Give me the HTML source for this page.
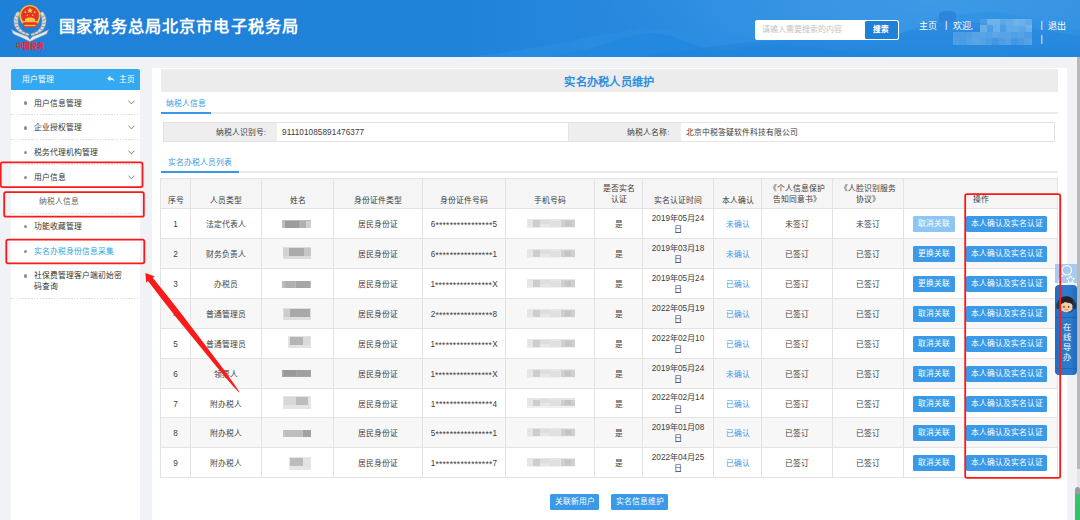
<!DOCTYPE html>
<html lang="zh-CN">
<head>
<meta charset="utf-8">
<title>国家税务总局北京市电子税务局</title>
<style>
html,body{margin:0;padding:0}
body{width:1080px;height:520px;overflow:hidden;background:#f0f2f5;font-family:"Liberation Sans",sans-serif;font-size:7.8px;color:#3a3a3a;position:relative;line-height:1.2}
div,span,a{box-sizing:border-box}
.abs{position:absolute}
#hd{position:absolute;left:0;top:0;width:1080px;height:57px;background:linear-gradient(90deg,#1f80d8 0%,#2083da 42%,#2788dd 58%,#3090e2 76%,#3292e3 90%,#2f8fe1 100%);overflow:hidden}
#hd svg.bg{position:absolute;left:0;top:0}
#title{position:absolute;left:58.5px;top:15.8px;font-size:16.2px;font-weight:bold;color:#fff;white-space:nowrap;line-height:20px}
#title span{display:inline-block;width:17.17px;text-align:center}
#logo{position:absolute;left:9.5px;top:2px}
#search{position:absolute;left:755px;top:19.5px;width:143.5px;height:20px;border-radius:2px;background:#fff;overflow:hidden;border:1px solid #fff}
#search .ph{position:absolute;left:6px;top:0;line-height:18px;font-size:8px;color:#c2c2c2;white-space:nowrap}
#search .btn{position:absolute;right:0;top:0;width:32.8px;height:18px;background:#1f80d8;color:#fff;font-weight:bold;font-size:7.6px;text-align:center;line-height:18px}
.nav{position:absolute;color:#fff;font-size:9px;white-space:nowrap;line-height:11px}
#side{position:absolute;left:11px;top:68.6px;width:129px;height:452px;background:#fff}
#side .sh{position:absolute;left:0;top:0;width:129px;height:21.2px;background:#34a9f1;border-radius:2px 2px 0 0;color:#fff}
#side .it{position:absolute;left:0;width:129px;color:#333;background:repeating-linear-gradient(90deg,#dcdee2 0,#dcdee2 1.5px,transparent 1.5px,transparent 2.86px) left bottom/100% 1px no-repeat}
#side .it .bl{position:absolute;left:13.3px;top:50%;width:3.2px;height:3.2px;margin-top:-1.3px;border-radius:50%;background:#8f8f8f}
#side .it .tx{position:absolute;left:23.3px;white-space:nowrap}
#side .it svg{position:absolute;left:116.5px;top:50%;margin-top:-2.4px}
.rb{position:absolute;border:1.9px solid #fb1b1b;border-radius:3px}
#panel{position:absolute;left:152px;top:68.4px;width:914.5px;height:452px;background:#fff}
#ptitle{position:absolute;left:160.5px;top:69px;width:897.5px;height:22.6px;background:#ececec;color:#2e8fe0;font-weight:bold;font-size:11.2px;text-align:center;line-height:26px;white-space:nowrap}
#ptitle span{display:inline-block;width:11.3px;text-align:center}
.tabline{position:absolute;left:160.5px;width:897.5px;height:1.5px;background:#eaeaea}
.tabact{position:absolute;height:2px;background:#3a97e6}
.tabtx{position:absolute;color:#3a97e6;white-space:nowrap}
.c{position:absolute;display:flex;align-items:center;justify-content:center;text-align:center;border-right:1px solid #e3e3e3;border-bottom:1px solid #e3e3e3;line-height:11.4px;color:#404040}
.c.h{background:#f5f5f5;color:#3a3a3a}
.c.e{background:#f7f7f7}
.c a{color:#3a97e6}
.c .v{position:relative;top:1.3px}
.d{font-size:8.2px}
.as{font-size:8.6px;letter-spacing:.23px;position:relative;top:.8px}
.btn{position:absolute;background:#3a9ae8;color:#fff;border-radius:1.5px;text-align:center;white-space:nowrap}
.btn.dis{background:#8fc5f2}
.mz{position:absolute;filter:blur(.7px)}
</style>
</head>
<body>
<div id="hd">
<svg class="bg" width="1080" height="57" viewBox="0 0 1080 57">
 <defs>
  <linearGradient id="m2" x1="0" y1="0" x2="0" y2="1"><stop offset="0" stop-color="#2a8be0"/><stop offset="1" stop-color="#2083dc"/></linearGradient>
  <radialGradient id="sky" cx="930" cy="0" r="330" gradientUnits="userSpaceOnUse" gradientTransform="translate(0 0) scale(1 .22)"><stop offset="0" stop-color="#4aa3ea" stop-opacity=".45"/><stop offset="1" stop-color="#4aa3ea" stop-opacity="0"/></radialGradient>
 </defs>
 <rect x="0" y="0" width="1080" height="57" fill="url(#sky)"/>
 <path d="M470 57 L520 50 L570 41 L610 33 L640 28 L680 31 L730 36 L790 40 L850 38 L900 33 L925 24 L938 17 L943 11 L952 11 L955 15 L975 13 L1000 12 L1030 18 L1060 26 L1080 31 L1080 57 Z" fill="#2e8fe2" opacity=".55"/>
 <path d="M939 23 L939 12.5 L942 12.5 L942 11 L953 11 L953 12.5 L956 12.5 L956 23 Z" fill="#2a82d8" opacity=".8"/>
 <path d="M956 21 L975 28 L1000 38 L1033 53 L1040 57 L1015 57 L990 44 L965 32 L950 27 Z" fill="#2584dc" opacity=".55"/>
 <path d="M548 57 L580 51 L610 42.5 L633 35.5 L653 33 L672 36 L692 44 L717 52 L742 48 L773 43.5 L805 46 L845 51 L885 57 Z" fill="#2389e0"/>
 <path d="M640 57 L690 49 L745 42.5 L800 39 L850 37.5 L900 33.5 L925 27 L945 22 L990 23 L1030 28 L1080 36 L1080 57 Z" fill="url(#m2)" opacity=".8"/>
</svg>
<svg id="logo" width="40" height="52" viewBox="0 0 40 52">
 <g>
  <path d="M7.4 9.6 C2.6 14.6 2.4 23.4 7.6 28.6 C10.8 31.6 15 33 19 34 L19 31.6 C13.2 30.2 9.6 27.2 8.4 22.2 C7.6 18 8.2 14 10.4 10.8 Z" fill="#d4d8dd" stroke="#7d868f" stroke-width=".55"/>
  <path d="M32.6 9.6 C37.4 14.6 37.6 23.4 32.4 28.6 C29.2 31.6 25 33 21 34 L21 31.6 C26.8 30.2 30.4 27.2 31.6 22.2 C32.4 18 31.8 14 29.6 10.8 Z" fill="#d4d8dd" stroke="#7d868f" stroke-width=".55"/>
  <path d="M5.4 13.6 l2.6 1.6 M4.4 17.4 l3 1 M4.4 21.2 l3.2 .2 M5.4 25 l3.2-.8 M7.6 28.2 l2.8-1.8 M11 30.8 l2-2.4 M14.8 32.6 l1.2-2.6" stroke="#6f7882" stroke-width=".7" fill="none"/>
  <path d="M34.6 13.6 l-2.6 1.6 M35.6 17.4 l-3 1 M35.6 21.2 l-3.2 .2 M34.6 25 l-3.2-.8 M32.4 28.2 l-2.8-1.8 M29 30.8 l-2-2.4 M25.2 32.6 l-1.2-2.6" stroke="#6f7882" stroke-width=".7" fill="none"/>
  <path d="M1.4 27.6 C6 30.6 12 32.6 17.6 34.4 L20 37.4 L22.4 34.4 C28 32.6 34 30.6 38.6 27.6 L36.6 32 C31 34.6 26 36.4 20 39.6 C14 36.4 9 34.6 3.4 32 Z" fill="#e6e9ec" stroke="#8d96a0" stroke-width=".55"/>
  <ellipse cx="20" cy="13.9" rx="10.5" ry="11" fill="#efbf35"/>
  <ellipse cx="20" cy="13.6" rx="9" ry="9.3" fill="#e6322b"/>
  <path d="M11.2 19 H28.8 V20.5 H11.2 Z" fill="#efbf35"/>
  <path d="M15 17 Q20 14.2 25 17 V19 H15 Z" fill="#f2c63e"/>
  <path d="M12.8 20.4 H27.2 L26.2 25.6 H13.8 Z" fill="#e5322b"/>
  <path d="M14.4 22.8 H25.6 V24.2 H14.4 Z" fill="#efbf35"/>
  <path d="M20 5.6 l.9 1.8 2 .25 -1.45 1.4 .35 2 -1.8-.95 -1.8.95 .35-2 -1.45-1.4 2-.25z" fill="#f7d54a"/>
  <circle cx="15.4" cy="10.2" r=".85" fill="#f7d54a"/><circle cx="24.6" cy="10.2" r=".85" fill="#f7d54a"/>
  <circle cx="17.4" cy="13.2" r=".75" fill="#f7d54a"/><circle cx="22.6" cy="13.2" r=".75" fill="#f7d54a"/>
 </g>
 <text x="20" y="46.9" text-anchor="middle" font-family="Liberation Sans, sans-serif" font-size="7.7" font-weight="bold" fill="#f0262a" textLength="28.5" lengthAdjust="spacingAndGlyphs">中国税务</text>
</svg>
<div id="title"><span>国</span><span>家</span><span>税</span><span>务</span><span>总</span><span>局</span><span>北</span><span>京</span><span>市</span><span>电</span><span>子</span><span>税</span><span>务</span><span>局</span></div>
<div id="search"><span class="ph">请输入需要搜索的内容</span><span class="btn">搜索</span></div>
<div class="nav" style="left:918.6px;top:20.6px">主页</div>
<div class="nav" style="left:945px;top:20.4px">|</div>
<div class="nav" style="left:952.6px;top:20.6px">欢迎,</div>
<div class="abs" style="left:0;top:0;filter:blur(.35px)"><i class="abs" style="left:980.0px;top:19.0px;width:6.5px;height:6.4px;background:rgba(255,255,255,0.10)"></i><i class="abs" style="left:986.5px;top:19.0px;width:6.5px;height:6.4px;background:rgba(255,255,255,0.30)"></i><i class="abs" style="left:993.0px;top:19.0px;width:6.5px;height:6.4px;background:rgba(255,255,255,0.30)"></i><i class="abs" style="left:999.5px;top:19.0px;width:6.5px;height:6.4px;background:rgba(255,255,255,0.20)"></i><i class="abs" style="left:1006.0px;top:19.0px;width:6.5px;height:6.4px;background:rgba(255,255,255,0.24)"></i><i class="abs" style="left:1012.5px;top:19.0px;width:6.5px;height:6.4px;background:rgba(255,255,255,0.30)"></i><i class="abs" style="left:1019.0px;top:19.0px;width:6.5px;height:6.4px;background:rgba(255,255,255,0.28)"></i><i class="abs" style="left:1025.5px;top:19.0px;width:6.5px;height:6.4px;background:rgba(255,255,255,0.22)"></i><i class="abs" style="left:980.0px;top:25.4px;width:6.5px;height:6.4px;background:rgba(255,255,255,0.30)"></i><i class="abs" style="left:986.5px;top:25.4px;width:6.5px;height:6.4px;background:rgba(255,255,255,0.16)"></i><i class="abs" style="left:993.0px;top:25.4px;width:6.5px;height:6.4px;background:rgba(255,255,255,0.30)"></i><i class="abs" style="left:999.5px;top:25.4px;width:6.5px;height:6.4px;background:rgba(255,255,255,0.16)"></i><i class="abs" style="left:1006.0px;top:25.4px;width:6.5px;height:6.4px;background:rgba(255,255,255,0.26)"></i><i class="abs" style="left:1012.5px;top:25.4px;width:6.5px;height:6.4px;background:rgba(255,255,255,0.28)"></i><i class="abs" style="left:1019.0px;top:25.4px;width:6.5px;height:6.4px;background:rgba(255,255,255,0.24)"></i><i class="abs" style="left:1025.5px;top:25.4px;width:6.5px;height:6.4px;background:rgba(255,255,255,0.30)"></i><i class="abs" style="left:952.6px;top:31.8px;width:6.5px;height:6.6px;background:rgba(255,255,255,0.16)"></i><i class="abs" style="left:959.1px;top:31.8px;width:6.5px;height:6.6px;background:rgba(255,255,255,0.16)"></i><i class="abs" style="left:965.6px;top:31.8px;width:6.5px;height:6.6px;background:rgba(255,255,255,0.18)"></i><i class="abs" style="left:972.1px;top:31.8px;width:6.5px;height:6.6px;background:rgba(255,255,255,0.22)"></i><i class="abs" style="left:978.6px;top:31.8px;width:6.5px;height:6.6px;background:rgba(255,255,255,0.24)"></i><i class="abs" style="left:985.1px;top:31.8px;width:6.5px;height:6.6px;background:rgba(255,255,255,0.21)"></i><i class="abs" style="left:991.6px;top:31.8px;width:6.5px;height:6.6px;background:rgba(255,255,255,0.24)"></i><i class="abs" style="left:998.1px;top:31.8px;width:6.5px;height:6.6px;background:rgba(255,255,255,0.22)"></i><i class="abs" style="left:1004.6px;top:31.8px;width:6.5px;height:6.6px;background:rgba(255,255,255,0.22)"></i><i class="abs" style="left:1011.1px;top:31.8px;width:6.5px;height:6.6px;background:rgba(255,255,255,0.18)"></i><i class="abs" style="left:1017.6px;top:31.8px;width:6.5px;height:6.6px;background:rgba(255,255,255,0.21)"></i><i class="abs" style="left:1024.1px;top:31.8px;width:6.5px;height:6.6px;background:rgba(255,255,255,0.16)"></i><i class="abs" style="left:1030.6px;top:31.8px;width:1.4px;height:6.6px;background:rgba(255,255,255,0.16)"></i><i class="abs" style="left:952.6px;top:38.4px;width:6.5px;height:6.6px;background:rgba(255,255,255,0.18)"></i><i class="abs" style="left:959.1px;top:38.4px;width:6.5px;height:6.6px;background:rgba(255,255,255,0.16)"></i><i class="abs" style="left:965.6px;top:38.4px;width:6.5px;height:6.6px;background:rgba(255,255,255,0.21)"></i><i class="abs" style="left:972.1px;top:38.4px;width:6.5px;height:6.6px;background:rgba(255,255,255,0.24)"></i><i class="abs" style="left:978.6px;top:38.4px;width:6.5px;height:6.6px;background:rgba(255,255,255,0.22)"></i><i class="abs" style="left:985.1px;top:38.4px;width:6.5px;height:6.6px;background:rgba(255,255,255,0.18)"></i><i class="abs" style="left:991.6px;top:38.4px;width:6.5px;height:6.6px;background:rgba(255,255,255,0.13)"></i><i class="abs" style="left:998.1px;top:38.4px;width:6.5px;height:6.6px;background:rgba(255,255,255,0.18)"></i><i class="abs" style="left:1004.6px;top:38.4px;width:6.5px;height:6.6px;background:rgba(255,255,255,0.21)"></i><i class="abs" style="left:1011.1px;top:38.4px;width:6.5px;height:6.6px;background:rgba(255,255,255,0.13)"></i><i class="abs" style="left:1017.6px;top:38.4px;width:6.5px;height:6.6px;background:rgba(255,255,255,0.16)"></i><i class="abs" style="left:1024.1px;top:38.4px;width:6.5px;height:6.6px;background:rgba(255,255,255,0.21)"></i><i class="abs" style="left:1030.6px;top:38.4px;width:1.4px;height:6.6px;background:rgba(255,255,255,0.24)"></i></div>
<div class="nav" style="left:1040.5px;top:20px">|</div>
<div class="nav" style="left:1040.5px;top:33.5px">|</div>
<div class="nav" style="left:1047.6px;top:20.6px">退出</div>
</div>
<div id="side">
<div class="sh"><span class="abs" style="left:11.4px;top:0;line-height:21.4px;font-size:7.9px">用户管理</span><svg class="abs" style="left:96px;top:6.6px" width="8" height="8" viewBox="0 0 16 16"><path d="M6.5 1.5 L0.5 7 L6.5 12.5 V9.2 C10.5 9.2 13.2 10.6 15.2 14.2 C14.6 8.8 11.6 5.4 6.5 4.9 Z" fill="#fff"/></svg><span class="abs" style="left:108.2px;top:0;line-height:21.4px;font-size:7.7px">主页</span></div>
<div class="it" style="top:21.2px;height:25.7px"><span class="bl"></span><span class="tx" style="left:23.3px;line-height:27.3px;color:#333">用户信息管理</span><svg width="7" height="5" viewBox="0 0 7 5"><path d="M.4 .6 L3.5 3.9 L6.6 .6" fill="none" stroke="#7a7a7a" stroke-width=".95"/></svg></div>
<div class="it" style="top:46.9px;height:24.5px"><span class="bl"></span><span class="tx" style="left:23.3px;line-height:26.1px;color:#333">企业授权管理</span><svg width="7" height="5" viewBox="0 0 7 5"><path d="M.4 .6 L3.5 3.9 L6.6 .6" fill="none" stroke="#7a7a7a" stroke-width=".95"/></svg></div>
<div class="it" style="top:71.4px;height:24.7px"><span class="bl"></span><span class="tx" style="left:23.3px;line-height:26.3px;color:#333">税务代理机构管理</span><svg width="7" height="5" viewBox="0 0 7 5"><path d="M.4 .6 L3.5 3.9 L6.6 .6" fill="none" stroke="#7a7a7a" stroke-width=".95"/></svg></div>
<div class="it" style="top:96.1px;height:24.8px;background:none"><span class="bl"></span><span class="tx" style="left:23.3px;line-height:26.4px;color:#333">用户信息</span><svg width="7" height="5" viewBox="0 0 7 5"><path d="M.4 .6 L3.5 3.9 L6.6 .6" fill="none" stroke="#7a7a7a" stroke-width=".95"/></svg></div>
<div class="it" style="top:120.9px;height:24.5px"><span class="tx" style="left:28.0px;line-height:26.1px;color:#666">纳税人信息</span></div>
<div class="it" style="top:145.4px;height:24.5px;background:none"><span class="bl"></span><span class="tx" style="left:23.3px;line-height:26.1px;color:#333">功能收藏管理</span></div>
<div class="it" style="top:170.4px;height:25.0px;background:none"><span class="bl"></span><span class="tx" style="left:23.3px;line-height:26.6px;color:#35a3dc">实名办税身份信息采集</span></div>
<div class="it" style="top:194.4px;height:36px"><span class="bl" style="top:11.4px;margin-top:0"></span><span class="tx" style="left:23.3px;top:8px;line-height:10.7px;white-space:normal;width:92px">社保费管理客户端初始密码查询</span></div>
</div>
<div id="panel"></div>
<div id="ptitle"><span>实</span><span>名</span><span>办</span><span>税</span><span>人</span><span>员</span><span>维</span><span>护</span></div>
<div class="tabtx" style="left:166.2px;top:98.7px">纳税人信息</div>
<div class="tabline" style="top:112.2px"></div><div class="tabact" style="left:160.5px;top:112px;width:50.5px"></div>
<div class="abs" style="left:163px;top:122px;width:892px;height:20px;border:1px solid #e3e3e3;background:#fff"></div>
<div class="abs" style="left:164px;top:123px;width:112.6px;height:18px;background:#eeeeee;text-align:right;line-height:19.8px;padding-right:10.8px;white-space:nowrap">纳税人识别号:</div>
<div class="abs" style="left:282px;top:123px;line-height:19.4px;font-size:8.2px;letter-spacing:.08px;white-space:nowrap">911101085891476377</div>
<div class="abs" style="left:567.5px;top:123px;width:113.3px;height:18px;background:#eeeeee;text-align:right;line-height:19.8px;padding-right:11.4px;white-space:nowrap;border-left:1px solid #e3e3e3">纳税人名称:</div>
<div class="abs" style="left:685.8px;top:123px;line-height:19.8px;white-space:nowrap">北京中税答疑软件科技有限公司</div>
<div class="tabtx" style="left:168px;top:157.8px">实名办税人员列表</div>
<div class="tabline" style="top:171px"></div><div class="tabact" style="left:160.5px;top:170.6px;width:78.3px"></div>
<div class="abs" style="left:160.0px;top:178.0px;width:898.0px;height:300.0px;border-left:1px solid #e3e3e3;border-top:1px solid #e3e3e3"></div>
<div class="c h" style="left:161.0px;top:179.0px;width:30.0px;height:30.0px"><span style="position:relative;top:7.1px">序号</span></div>
<div class="c h" style="left:191.0px;top:179.0px;width:71.0px;height:30.0px"><span style="position:relative;top:7.1px">人员类型</span></div>
<div class="c h" style="left:262.0px;top:179.0px;width:72.0px;height:30.0px"><span style="position:relative;top:7.1px">姓名</span></div>
<div class="c h" style="left:334.0px;top:179.0px;width:89.0px;height:30.0px"><span style="position:relative;top:7.1px">身份证件类型</span></div>
<div class="c h" style="left:423.0px;top:179.0px;width:83.0px;height:30.0px"><span style="position:relative;top:7.1px">身份证件号码</span></div>
<div class="c h" style="left:506.0px;top:179.0px;width:89.0px;height:30.0px"><span style="position:relative;top:7.1px">手机号码</span></div>
<div class="c h" style="left:595.0px;top:179.0px;width:48.0px;height:30.0px"><span style="position:relative;top:.9px">是否实名<br>认证</span></div>
<div class="c h" style="left:643.0px;top:179.0px;width:71.0px;height:30.0px"><span style="position:relative;top:7.1px">实名认证时间</span></div>
<div class="c h" style="left:714.0px;top:179.0px;width:48.0px;height:30.0px"><span style="position:relative;top:7.1px">本人确认</span></div>
<div class="c h" style="left:762.0px;top:179.0px;width:71.0px;height:30.0px"><span style="position:relative;top:.9px">《个人信息保护<br>告知同意书》</span></div>
<div class="c h" style="left:833.0px;top:179.0px;width:71.0px;height:30.0px"><span style="position:relative;top:.9px">《人脸识别服务<br>协议》</span></div>
<div class="c h" style="left:904.0px;top:179.0px;width:154.0px;height:30.0px"><span style="position:relative;top:7.1px"></span></div>
<div class="abs" style="left:972.6px;top:195px;white-space:nowrap">操作</div>
<div class="c " style="left:161.0px;top:209.0px;width:30.0px;height:30.0px"><span class="v"><span class="d">1</span></span></div><div class="c " style="left:191.0px;top:209.0px;width:71.0px;height:30.0px"><span class="v">法定代表人</span></div><div class="c " style="left:262.0px;top:209.0px;width:72.0px;height:30.0px"></div><div class="c " style="left:334.0px;top:209.0px;width:89.0px;height:30.0px"><span class="v">居民身份证</span></div><div class="c " style="left:423.0px;top:209.0px;width:83.0px;height:30.0px"><span class="v"><span class="d">6<span class="as">****************</span>5</span></span></div><div class="c " style="left:506.0px;top:209.0px;width:89.0px;height:30.0px"></div><div class="c " style="left:595.0px;top:209.0px;width:48.0px;height:30.0px"><span class="v">是</span></div><div class="c " style="left:643.0px;top:209.0px;width:71.0px;height:30.0px"><span class="v"><span class="d" style="position:relative;top:-.6px">2019年05月24<br>日</span></span></div><div class="c " style="left:714.0px;top:209.0px;width:48.0px;height:30.0px"><span class="v"><a>未确认</a></span></div><div class="c " style="left:762.0px;top:209.0px;width:71.0px;height:30.0px"><span class="v">未签订</span></div><div class="c " style="left:833.0px;top:209.0px;width:71.0px;height:30.0px"><span class="v">未签订</span></div><div class="c " style="left:904.0px;top:209.0px;width:154.0px;height:30.0px"></div>
<div class="mz" style="left:282.0px;top:220.0px;width:28.5px;height:8.4px;background:#bdbdbd"><i class="abs" style="left:3.0px;top:0.5px;width:14.0px;height:7.5px;background:#9c9c9c"></i><i class="abs" style="left:17.0px;top:1.0px;width:7.0px;height:7.0px;background:#b0b0b0"></i><i class="abs" style="left:24.0px;top:1.0px;width:4.5px;height:7.0px;background:#cfcfcf"></i></div><div class="mz" style="left:526.5px;top:218.5px;width:48.0px;height:9.6px;background:#e6e6e6"><i class="abs" style="left:6.0px;top:1.5px;width:7.0px;height:6.5px;background:#cdcdcd"></i><i class="abs" style="left:13.0px;top:1.0px;width:10.0px;height:4.0px;background:#dedede"></i><i class="abs" style="left:23.0px;top:2.0px;width:10.0px;height:6.0px;background:#e0e0e0"></i><i class="abs" style="left:34.0px;top:1.5px;width:14.0px;height:7.0px;background:#cfcfcf"></i><i class="abs" style="left:38.0px;top:2.0px;width:6.0px;height:5.0px;background:#c4c4c4"></i><i class="abs" style="left:0.0px;top:8.0px;width:48.0px;height:1.6px;background:#f0f0f0"></i></div><div class="btn dis" style="left:913px;top:216.0px;width:42px;height:16px;line-height:16.6px">取消关联</div><div class="btn" style="left:966px;top:216.0px;width:81.4px;height:16px;line-height:16.6px">本人确认及实名认证</div>
<div class="c e" style="left:161.0px;top:239.0px;width:30.0px;height:30.0px"><span class="v"><span class="d">2</span></span></div><div class="c e" style="left:191.0px;top:239.0px;width:71.0px;height:30.0px"><span class="v">财务负责人</span></div><div class="c e" style="left:262.0px;top:239.0px;width:72.0px;height:30.0px"></div><div class="c e" style="left:334.0px;top:239.0px;width:89.0px;height:30.0px"><span class="v">居民身份证</span></div><div class="c e" style="left:423.0px;top:239.0px;width:83.0px;height:30.0px"><span class="v"><span class="d">6<span class="as">****************</span>1</span></span></div><div class="c e" style="left:506.0px;top:239.0px;width:89.0px;height:30.0px"></div><div class="c e" style="left:595.0px;top:239.0px;width:48.0px;height:30.0px"><span class="v">是</span></div><div class="c e" style="left:643.0px;top:239.0px;width:71.0px;height:30.0px"><span class="v"><span class="d" style="position:relative;top:-.6px">2019年03月18<br>日</span></span></div><div class="c e" style="left:714.0px;top:239.0px;width:48.0px;height:30.0px"><span class="v"><a>未确认</a></span></div><div class="c e" style="left:762.0px;top:239.0px;width:71.0px;height:30.0px"><span class="v">已签订</span></div><div class="c e" style="left:833.0px;top:239.0px;width:71.0px;height:30.0px"><span class="v">已签订</span></div><div class="c e" style="left:904.0px;top:239.0px;width:154.0px;height:30.0px"></div>
<div class="mz" style="left:283.0px;top:247.0px;width:27.5px;height:12.0px;background:#dcdcdc"><i class="abs" style="left:6.0px;top:1.0px;width:15.0px;height:7.5px;background:#aaaaaa"></i><i class="abs" style="left:21.0px;top:1.0px;width:6.5px;height:8.0px;background:#c6c6c6"></i><i class="abs" style="left:0.0px;top:1.0px;width:6.0px;height:8.0px;background:#d2d2d2"></i></div><div class="mz" style="left:526.5px;top:248.5px;width:48.0px;height:9.6px;background:#e6e6e6"><i class="abs" style="left:6.0px;top:1.5px;width:7.0px;height:6.5px;background:#cdcdcd"></i><i class="abs" style="left:13.0px;top:1.0px;width:10.0px;height:4.0px;background:#dedede"></i><i class="abs" style="left:23.0px;top:2.0px;width:10.0px;height:6.0px;background:#e0e0e0"></i><i class="abs" style="left:34.0px;top:1.5px;width:14.0px;height:7.0px;background:#cfcfcf"></i><i class="abs" style="left:38.0px;top:2.0px;width:6.0px;height:5.0px;background:#c4c4c4"></i><i class="abs" style="left:0.0px;top:8.0px;width:48.0px;height:1.6px;background:#f0f0f0"></i></div><div class="btn " style="left:913px;top:246.0px;width:42px;height:16px;line-height:16.6px">更换关联</div><div class="btn" style="left:966px;top:246.0px;width:81.4px;height:16px;line-height:16.6px">本人确认及实名认证</div>
<div class="c " style="left:161.0px;top:269.0px;width:30.0px;height:30.0px"><span class="v"><span class="d">3</span></span></div><div class="c " style="left:191.0px;top:269.0px;width:71.0px;height:30.0px"><span class="v">办税员</span></div><div class="c " style="left:262.0px;top:269.0px;width:72.0px;height:30.0px"></div><div class="c " style="left:334.0px;top:269.0px;width:89.0px;height:30.0px"><span class="v">居民身份证</span></div><div class="c " style="left:423.0px;top:269.0px;width:83.0px;height:30.0px"><span class="v"><span class="d">1<span class="as">****************</span>X</span></span></div><div class="c " style="left:506.0px;top:269.0px;width:89.0px;height:30.0px"></div><div class="c " style="left:595.0px;top:269.0px;width:48.0px;height:30.0px"><span class="v">是</span></div><div class="c " style="left:643.0px;top:269.0px;width:71.0px;height:30.0px"><span class="v"><span class="d" style="position:relative;top:-.6px">2019年05月24<br>日</span></span></div><div class="c " style="left:714.0px;top:269.0px;width:48.0px;height:30.0px"><span class="v"><a>已确认</a></span></div><div class="c " style="left:762.0px;top:269.0px;width:71.0px;height:30.0px"><span class="v">已签订</span></div><div class="c " style="left:833.0px;top:269.0px;width:71.0px;height:30.0px"><span class="v">已签订</span></div><div class="c " style="left:904.0px;top:269.0px;width:154.0px;height:30.0px"></div>
<div class="mz" style="left:282.0px;top:280.6px;width:28.5px;height:7.8px;background:#bcbcbc"><i class="abs" style="left:3.0px;top:0.4px;width:10.0px;height:7.0px;background:#b0b0b0"></i><i class="abs" style="left:14.0px;top:0.4px;width:14.0px;height:7.0px;background:#a6a6a6"></i></div><div class="mz" style="left:526.5px;top:278.5px;width:48.0px;height:9.6px;background:#e6e6e6"><i class="abs" style="left:6.0px;top:1.5px;width:7.0px;height:6.5px;background:#cdcdcd"></i><i class="abs" style="left:13.0px;top:1.0px;width:10.0px;height:4.0px;background:#dedede"></i><i class="abs" style="left:23.0px;top:2.0px;width:10.0px;height:6.0px;background:#e0e0e0"></i><i class="abs" style="left:34.0px;top:1.5px;width:14.0px;height:7.0px;background:#cfcfcf"></i><i class="abs" style="left:38.0px;top:2.0px;width:6.0px;height:5.0px;background:#c4c4c4"></i><i class="abs" style="left:0.0px;top:8.0px;width:48.0px;height:1.6px;background:#f0f0f0"></i></div><div class="btn " style="left:913px;top:276.0px;width:42px;height:16px;line-height:16.6px">更换关联</div><div class="btn" style="left:966px;top:276.0px;width:81.4px;height:16px;line-height:16.6px">本人确认及实名认证</div>
<div class="c e" style="left:161.0px;top:299.0px;width:30.0px;height:30.0px"><span class="v"><span class="d">4</span></span></div><div class="c e" style="left:191.0px;top:299.0px;width:71.0px;height:30.0px"><span class="v">普通管理员</span></div><div class="c e" style="left:262.0px;top:299.0px;width:72.0px;height:30.0px"></div><div class="c e" style="left:334.0px;top:299.0px;width:89.0px;height:30.0px"><span class="v">居民身份证</span></div><div class="c e" style="left:423.0px;top:299.0px;width:83.0px;height:30.0px"><span class="v"><span class="d">2<span class="as">****************</span>8</span></span></div><div class="c e" style="left:506.0px;top:299.0px;width:89.0px;height:30.0px"></div><div class="c e" style="left:595.0px;top:299.0px;width:48.0px;height:30.0px"><span class="v">是</span></div><div class="c e" style="left:643.0px;top:299.0px;width:71.0px;height:30.0px"><span class="v"><span class="d" style="position:relative;top:-.6px">2022年05月19<br>日</span></span></div><div class="c e" style="left:714.0px;top:299.0px;width:48.0px;height:30.0px"><span class="v"><a>已确认</a></span></div><div class="c e" style="left:762.0px;top:299.0px;width:71.0px;height:30.0px"><span class="v">已签订</span></div><div class="c e" style="left:833.0px;top:299.0px;width:71.0px;height:30.0px"><span class="v">已签订</span></div><div class="c e" style="left:904.0px;top:299.0px;width:154.0px;height:30.0px"></div>
<div class="mz" style="left:283.0px;top:307.5px;width:27.5px;height:12.5px;background:#dedede"><i class="abs" style="left:7.0px;top:1.5px;width:20.0px;height:7.5px;background:#a9a9a9"></i><i class="abs" style="left:1.0px;top:1.5px;width:6.0px;height:8.0px;background:#cccccc"></i></div><div class="mz" style="left:526.5px;top:308.5px;width:48.0px;height:9.6px;background:#e6e6e6"><i class="abs" style="left:6.0px;top:1.5px;width:7.0px;height:6.5px;background:#cdcdcd"></i><i class="abs" style="left:13.0px;top:1.0px;width:10.0px;height:4.0px;background:#dedede"></i><i class="abs" style="left:23.0px;top:2.0px;width:10.0px;height:6.0px;background:#e0e0e0"></i><i class="abs" style="left:34.0px;top:1.5px;width:14.0px;height:7.0px;background:#cfcfcf"></i><i class="abs" style="left:38.0px;top:2.0px;width:6.0px;height:5.0px;background:#c4c4c4"></i><i class="abs" style="left:0.0px;top:8.0px;width:48.0px;height:1.6px;background:#f0f0f0"></i></div><div class="btn " style="left:913px;top:306.0px;width:42px;height:16px;line-height:16.6px">取消关联</div><div class="btn" style="left:966px;top:306.0px;width:81.4px;height:16px;line-height:16.6px">本人确认及实名认证</div>
<div class="c " style="left:161.0px;top:329.0px;width:30.0px;height:30.0px"><span class="v"><span class="d">5</span></span></div><div class="c " style="left:191.0px;top:329.0px;width:71.0px;height:30.0px"><span class="v">普通管理员</span></div><div class="c " style="left:262.0px;top:329.0px;width:72.0px;height:30.0px"></div><div class="c " style="left:334.0px;top:329.0px;width:89.0px;height:30.0px"><span class="v">居民身份证</span></div><div class="c " style="left:423.0px;top:329.0px;width:83.0px;height:30.0px"><span class="v"><span class="d">1<span class="as">****************</span>X</span></span></div><div class="c " style="left:506.0px;top:329.0px;width:89.0px;height:30.0px"></div><div class="c " style="left:595.0px;top:329.0px;width:48.0px;height:30.0px"><span class="v">是</span></div><div class="c " style="left:643.0px;top:329.0px;width:71.0px;height:30.0px"><span class="v"><span class="d" style="position:relative;top:-.6px">2022年02月10<br>日</span></span></div><div class="c " style="left:714.0px;top:329.0px;width:48.0px;height:30.0px"><span class="v"><a>已确认</a></span></div><div class="c " style="left:762.0px;top:329.0px;width:71.0px;height:30.0px"><span class="v">已签订</span></div><div class="c " style="left:833.0px;top:329.0px;width:71.0px;height:30.0px"><span class="v">已签订</span></div><div class="c " style="left:904.0px;top:329.0px;width:154.0px;height:30.0px"></div>
<div class="mz" style="left:288.0px;top:336.0px;width:22.5px;height:12.0px;background:#e2e2e2"><i class="abs" style="left:2.0px;top:0.5px;width:13.0px;height:8.5px;background:#b4b4b4"></i><i class="abs" style="left:15.0px;top:1.0px;width:7.0px;height:8.0px;background:#dadada"></i></div><div class="mz" style="left:526.5px;top:338.5px;width:48.0px;height:9.6px;background:#e6e6e6"><i class="abs" style="left:6.0px;top:1.5px;width:7.0px;height:6.5px;background:#cdcdcd"></i><i class="abs" style="left:13.0px;top:1.0px;width:10.0px;height:4.0px;background:#dedede"></i><i class="abs" style="left:23.0px;top:2.0px;width:10.0px;height:6.0px;background:#e0e0e0"></i><i class="abs" style="left:34.0px;top:1.5px;width:14.0px;height:7.0px;background:#cfcfcf"></i><i class="abs" style="left:38.0px;top:2.0px;width:6.0px;height:5.0px;background:#c4c4c4"></i><i class="abs" style="left:0.0px;top:8.0px;width:48.0px;height:1.6px;background:#f0f0f0"></i></div><div class="btn " style="left:913px;top:336.0px;width:42px;height:16px;line-height:16.6px">取消关联</div><div class="btn" style="left:966px;top:336.0px;width:81.4px;height:16px;line-height:16.6px">本人确认及实名认证</div>
<div class="c e" style="left:161.0px;top:359.0px;width:30.0px;height:30.0px"><span class="v"><span class="d">6</span></span></div><div class="c e" style="left:191.0px;top:359.0px;width:71.0px;height:30.0px"><span class="v">领票人</span></div><div class="c e" style="left:262.0px;top:359.0px;width:72.0px;height:30.0px"></div><div class="c e" style="left:334.0px;top:359.0px;width:89.0px;height:30.0px"><span class="v">居民身份证</span></div><div class="c e" style="left:423.0px;top:359.0px;width:83.0px;height:30.0px"><span class="v"><span class="d">1<span class="as">****************</span>X</span></span></div><div class="c e" style="left:506.0px;top:359.0px;width:89.0px;height:30.0px"></div><div class="c e" style="left:595.0px;top:359.0px;width:48.0px;height:30.0px"><span class="v">是</span></div><div class="c e" style="left:643.0px;top:359.0px;width:71.0px;height:30.0px"><span class="v"><span class="d" style="position:relative;top:-.6px">2019年05月24<br>日</span></span></div><div class="c e" style="left:714.0px;top:359.0px;width:48.0px;height:30.0px"><span class="v"><a>未确认</a></span></div><div class="c e" style="left:762.0px;top:359.0px;width:71.0px;height:30.0px"><span class="v">已签订</span></div><div class="c e" style="left:833.0px;top:359.0px;width:71.0px;height:30.0px"><span class="v">已签订</span></div><div class="c e" style="left:904.0px;top:359.0px;width:154.0px;height:30.0px"></div>
<div class="mz" style="left:282.0px;top:369.6px;width:28.5px;height:7.0px;background:#a6a6a6"><i class="abs" style="left:2.0px;top:0.4px;width:12.0px;height:6.0px;background:#9a9a9a"></i><i class="abs" style="left:15.0px;top:0.4px;width:13.0px;height:6.0px;background:#a0a0a0"></i></div><div class="mz" style="left:526.5px;top:368.5px;width:48.0px;height:9.6px;background:#e6e6e6"><i class="abs" style="left:6.0px;top:1.5px;width:7.0px;height:6.5px;background:#cdcdcd"></i><i class="abs" style="left:13.0px;top:1.0px;width:10.0px;height:4.0px;background:#dedede"></i><i class="abs" style="left:23.0px;top:2.0px;width:10.0px;height:6.0px;background:#e0e0e0"></i><i class="abs" style="left:34.0px;top:1.5px;width:14.0px;height:7.0px;background:#cfcfcf"></i><i class="abs" style="left:38.0px;top:2.0px;width:6.0px;height:5.0px;background:#c4c4c4"></i><i class="abs" style="left:0.0px;top:8.0px;width:48.0px;height:1.6px;background:#f0f0f0"></i></div><div class="btn " style="left:913px;top:366.0px;width:42px;height:16px;line-height:16.6px">取消关联</div><div class="btn" style="left:966px;top:366.0px;width:81.4px;height:16px;line-height:16.6px">本人确认及实名认证</div>
<div class="c " style="left:161.0px;top:389.0px;width:30.0px;height:29.0px"><span class="v"><span class="d">7</span></span></div><div class="c " style="left:191.0px;top:389.0px;width:71.0px;height:29.0px"><span class="v">附办税人</span></div><div class="c " style="left:262.0px;top:389.0px;width:72.0px;height:29.0px"></div><div class="c " style="left:334.0px;top:389.0px;width:89.0px;height:29.0px"><span class="v">居民身份证</span></div><div class="c " style="left:423.0px;top:389.0px;width:83.0px;height:29.0px"><span class="v"><span class="d">1<span class="as">****************</span>4</span></span></div><div class="c " style="left:506.0px;top:389.0px;width:89.0px;height:29.0px"></div><div class="c " style="left:595.0px;top:389.0px;width:48.0px;height:29.0px"><span class="v">是</span></div><div class="c " style="left:643.0px;top:389.0px;width:71.0px;height:29.0px"><span class="v"><span class="d" style="position:relative;top:-.6px">2022年02月14<br>日</span></span></div><div class="c " style="left:714.0px;top:389.0px;width:48.0px;height:29.0px"><span class="v"><a>已确认</a></span></div><div class="c " style="left:762.0px;top:389.0px;width:71.0px;height:29.0px"><span class="v">已签订</span></div><div class="c " style="left:833.0px;top:389.0px;width:71.0px;height:29.0px"><span class="v">已签订</span></div><div class="c " style="left:904.0px;top:389.0px;width:154.0px;height:29.0px"></div>
<div class="mz" style="left:283.0px;top:396.0px;width:27.5px;height:13.0px;background:#e4e4e4"><i class="abs" style="left:13.0px;top:1.0px;width:12.0px;height:7.5px;background:#bcbcbc"></i><i class="abs" style="left:1.0px;top:1.0px;width:12.0px;height:8.0px;background:#d8d8d8"></i></div><div class="mz" style="left:526.5px;top:398.0px;width:48.0px;height:9.6px;background:#e6e6e6"><i class="abs" style="left:6.0px;top:1.5px;width:7.0px;height:6.5px;background:#cdcdcd"></i><i class="abs" style="left:13.0px;top:1.0px;width:10.0px;height:4.0px;background:#dedede"></i><i class="abs" style="left:23.0px;top:2.0px;width:10.0px;height:6.0px;background:#e0e0e0"></i><i class="abs" style="left:34.0px;top:1.5px;width:14.0px;height:7.0px;background:#cfcfcf"></i><i class="abs" style="left:38.0px;top:2.0px;width:6.0px;height:5.0px;background:#c4c4c4"></i><i class="abs" style="left:0.0px;top:8.0px;width:48.0px;height:1.6px;background:#f0f0f0"></i></div><div class="btn " style="left:913px;top:395.5px;width:42px;height:16px;line-height:16.6px">取消关联</div><div class="btn" style="left:966px;top:395.5px;width:81.4px;height:16px;line-height:16.6px">本人确认及实名认证</div>
<div class="c e" style="left:161.0px;top:418.0px;width:30.0px;height:30.0px"><span class="v"><span class="d">8</span></span></div><div class="c e" style="left:191.0px;top:418.0px;width:71.0px;height:30.0px"><span class="v">附办税人</span></div><div class="c e" style="left:262.0px;top:418.0px;width:72.0px;height:30.0px"></div><div class="c e" style="left:334.0px;top:418.0px;width:89.0px;height:30.0px"><span class="v">居民身份证</span></div><div class="c e" style="left:423.0px;top:418.0px;width:83.0px;height:30.0px"><span class="v"><span class="d">5<span class="as">****************</span>1</span></span></div><div class="c e" style="left:506.0px;top:418.0px;width:89.0px;height:30.0px"></div><div class="c e" style="left:595.0px;top:418.0px;width:48.0px;height:30.0px"><span class="v">是</span></div><div class="c e" style="left:643.0px;top:418.0px;width:71.0px;height:30.0px"><span class="v"><span class="d" style="position:relative;top:-.6px">2019年01月08<br>日</span></span></div><div class="c e" style="left:714.0px;top:418.0px;width:48.0px;height:30.0px"><span class="v"><a>已确认</a></span></div><div class="c e" style="left:762.0px;top:418.0px;width:71.0px;height:30.0px"><span class="v">已签订</span></div><div class="c e" style="left:833.0px;top:418.0px;width:71.0px;height:30.0px"><span class="v">已签订</span></div><div class="c e" style="left:904.0px;top:418.0px;width:154.0px;height:30.0px"></div>
<div class="mz" style="left:283.0px;top:429.6px;width:27.5px;height:7.8px;background:#c4c4c4"><i class="abs" style="left:2.0px;top:0.4px;width:17.0px;height:7.0px;background:#bebebe"></i><i class="abs" style="left:20.0px;top:0.4px;width:7.5px;height:7.0px;background:#a2a2a2"></i></div><div class="mz" style="left:526.5px;top:427.5px;width:48.0px;height:9.6px;background:#e6e6e6"><i class="abs" style="left:6.0px;top:1.5px;width:7.0px;height:6.5px;background:#cdcdcd"></i><i class="abs" style="left:13.0px;top:1.0px;width:10.0px;height:4.0px;background:#dedede"></i><i class="abs" style="left:23.0px;top:2.0px;width:10.0px;height:6.0px;background:#e0e0e0"></i><i class="abs" style="left:34.0px;top:1.5px;width:14.0px;height:7.0px;background:#cfcfcf"></i><i class="abs" style="left:38.0px;top:2.0px;width:6.0px;height:5.0px;background:#c4c4c4"></i><i class="abs" style="left:0.0px;top:8.0px;width:48.0px;height:1.6px;background:#f0f0f0"></i></div><div class="btn " style="left:913px;top:425.0px;width:42px;height:16px;line-height:16.6px">取消关联</div><div class="btn" style="left:966px;top:425.0px;width:81.4px;height:16px;line-height:16.6px">本人确认及实名认证</div>
<div class="c " style="left:161.0px;top:448.0px;width:30.0px;height:30.0px"><span class="v"><span class="d">9</span></span></div><div class="c " style="left:191.0px;top:448.0px;width:71.0px;height:30.0px"><span class="v">附办税人</span></div><div class="c " style="left:262.0px;top:448.0px;width:72.0px;height:30.0px"></div><div class="c " style="left:334.0px;top:448.0px;width:89.0px;height:30.0px"><span class="v">居民身份证</span></div><div class="c " style="left:423.0px;top:448.0px;width:83.0px;height:30.0px"><span class="v"><span class="d">1<span class="as">****************</span>7</span></span></div><div class="c " style="left:506.0px;top:448.0px;width:89.0px;height:30.0px"></div><div class="c " style="left:595.0px;top:448.0px;width:48.0px;height:30.0px"><span class="v">是</span></div><div class="c " style="left:643.0px;top:448.0px;width:71.0px;height:30.0px"><span class="v"><span class="d" style="position:relative;top:-.6px">2022年04月25<br>日</span></span></div><div class="c " style="left:714.0px;top:448.0px;width:48.0px;height:30.0px"><span class="v"><a>已确认</a></span></div><div class="c " style="left:762.0px;top:448.0px;width:71.0px;height:30.0px"><span class="v">已签订</span></div><div class="c " style="left:833.0px;top:448.0px;width:71.0px;height:30.0px"><span class="v">已签订</span></div><div class="c " style="left:904.0px;top:448.0px;width:154.0px;height:30.0px"></div>
<div class="mz" style="left:289.0px;top:457.0px;width:21.5px;height:13.0px;background:#e6e6e6"><i class="abs" style="left:1.0px;top:1.0px;width:13.0px;height:8.0px;background:#bcbcbc"></i><i class="abs" style="left:14.0px;top:1.0px;width:7.0px;height:9.0px;background:#e0e4ea"></i></div><div class="mz" style="left:526.5px;top:457.5px;width:48.0px;height:9.6px;background:#e6e6e6"><i class="abs" style="left:6.0px;top:1.5px;width:7.0px;height:6.5px;background:#cdcdcd"></i><i class="abs" style="left:13.0px;top:1.0px;width:10.0px;height:4.0px;background:#dedede"></i><i class="abs" style="left:23.0px;top:2.0px;width:10.0px;height:6.0px;background:#e0e0e0"></i><i class="abs" style="left:34.0px;top:1.5px;width:14.0px;height:7.0px;background:#cfcfcf"></i><i class="abs" style="left:38.0px;top:2.0px;width:6.0px;height:5.0px;background:#c4c4c4"></i><i class="abs" style="left:0.0px;top:8.0px;width:48.0px;height:1.6px;background:#f0f0f0"></i></div><div class="btn " style="left:913px;top:455.0px;width:42px;height:16px;line-height:16.6px">取消关联</div><div class="btn" style="left:966px;top:455.0px;width:81.4px;height:16px;line-height:16.6px">本人确认及实名认证</div>
<div class="btn" style="left:550px;top:494.4px;width:49.4px;height:16px;line-height:16.6px">关联新用户</div>
<div class="btn" style="left:611px;top:494.4px;width:57.3px;height:16px;line-height:16.6px">实名信息维护</div>
<div class="abs" style="left:1054.8px;top:263.7px;width:23px;height:19px;background:#a7caee"></div>
<svg class="abs" style="left:1054.8px;top:263.7px" width="23" height="19" viewBox="0 0 23 19"><circle cx="11.8" cy="6.3" r="4.7" fill="none" stroke="#fff" stroke-width="1.1"/><path d="M3.6 18.6 C4 14.6 5.6 12.4 8.4 11" fill="none" stroke="#fff" stroke-width="1.1"/><path d="M15.6 11.6 l1.25 2.5 2.75.4 -2 1.95 .5 2.75 -2.5-1.3 -2.5 1.3 .5-2.75 -2-1.95 2.75-.4z" fill="#a7caee" stroke="#fff" stroke-width="1"/></svg>
<div class="abs" style="left:1055.2px;top:285.2px;width:22px;height:90px;border-radius:4px;background:linear-gradient(90deg,#1f6cc0 0%,#2b7ccf 45%,#2a78ca 75%,#1f69bb 100%)"></div>
<div class="abs" style="left:1055.6px;top:317px;width:21px;height:.8px;background:#1a5eae;opacity:.7"></div>
<div class="abs" style="left:1055.6px;top:368.4px;width:21px;height:.8px;background:#1a5eae;opacity:.6"></div>
<svg class="abs" style="left:1055px;top:293px" width="23" height="22" viewBox="0 0 23 22"><path d="M3 11.4 C3 1.6 19.6 1.6 19.6 11.4" fill="none" stroke="#2a3340" stroke-width="1.5"/><ellipse cx="11.3" cy="13.4" rx="6.4" ry="5.9" fill="#f3cfa6"/><path d="M4.6 12.6 C3.6 6.4 7.4 3.6 11.6 3.6 C16.2 3.6 19 6.8 18 12.6 C16.6 10.2 14.6 9.4 12.2 9.8 C10.8 8.8 9.6 8.8 8.6 10 C6.8 10.4 5.4 11.2 4.6 12.6 Z" fill="#23232b"/><rect x="1.4" y="9.6" width="3.6" height="6.4" rx="1.6" fill="#2a3340"/><rect x="17.6" y="9.6" width="3.6" height="6.4" rx="1.6" fill="#2a3340"/><circle cx="9" cy="13.9" r=".8" fill="#3a2a22"/><circle cx="13.6" cy="13.9" r=".8" fill="#3a2a22"/><path d="M9.8 16.4 Q11.3 17.6 12.8 16.4" fill="none" stroke="#b5544a" stroke-width=".6"/><path d="M18.6 16 C18 18.6 15 19.4 13 19" fill="none" stroke="#2a3340" stroke-width=".7"/></svg>
<div class="abs" style="left:1061.6px;top:323px;width:10px;color:#fff;font-size:8.2px;line-height:10px;text-align:center">在线导办</div>
<svg class="abs" style="left:0;top:0" width="1080" height="520" viewBox="0 0 1080 520"><rect x="0.70" y="162.40" width="141.80" height="24.70" rx="1.8" fill="none" stroke="#fb1818" stroke-width="1.8"/><rect x="4.20" y="192.20" width="139.60" height="24.50" rx="1.8" fill="none" stroke="#fb1818" stroke-width="1.8"/><rect x="6.30" y="239.70" width="138.00" height="23.60" rx="1.8" fill="none" stroke="#fb1818" stroke-width="1.8"/><rect x="965.20" y="194.20" width="95.00" height="283.60" rx="1.8" fill="none" stroke="#fb1818" stroke-width="1.8"/></svg>
<svg class="abs" style="left:0;top:0" width="1080" height="520" viewBox="0 0 1080 520"><path d="M145.4 273.0 L154.9 276.5 L152.6 277.4 L166.7 294.9 L181.6 314.0 L203.7 342.9 L223.7 369.6 L234.4 384.4 L239.4 392.0 L239.0 392.4 L232.7 385.7 L220.9 371.9 L199.6 346.1 L176.7 317.9 L161.6 298.8 L148.0 281.0 L146.2 282.6 Z" fill="#fb1a1a"/></svg>
<div class="abs" style="left:1076.6px;top:57px;width:3.4px;height:412px;background:#b9b9b9"></div>
<div class="abs" style="left:1076.6px;top:469px;width:3.4px;height:51px;background:#e4e4e6"></div>
<div class="abs" style="left:1074.6px;top:486.6px;width:5.4px;height:34px;border-radius:2.5px 2.5px 0 0;background:linear-gradient(180deg,#9c9c9c 0,#9c9c9c 6px,#35c46f 8px,#2fc56b 100%)"></div>
</body>
</html>
